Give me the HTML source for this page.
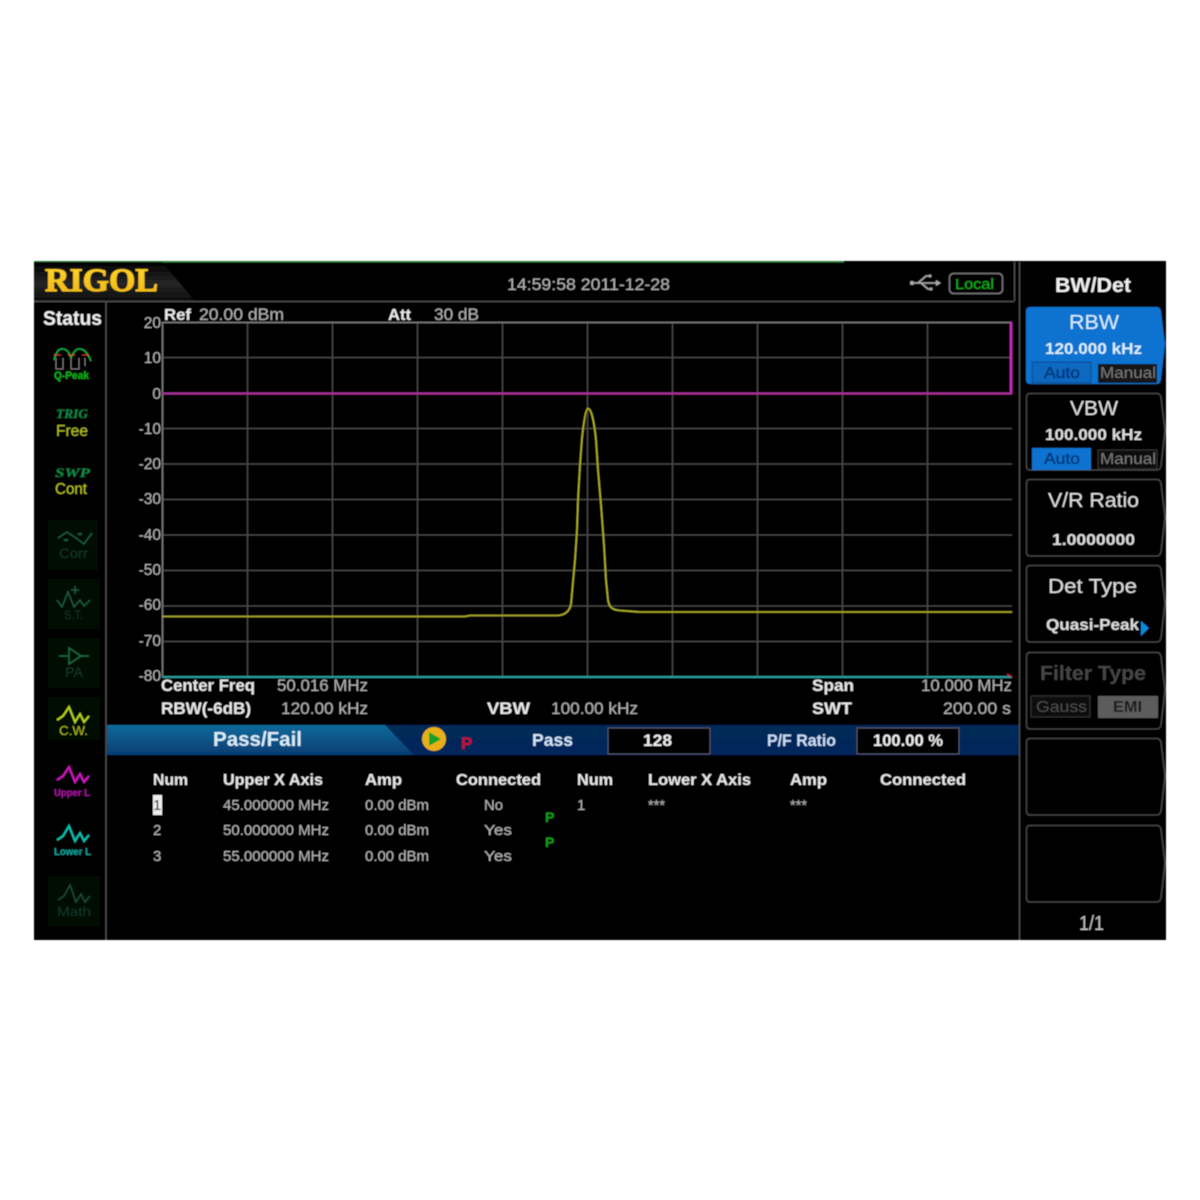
<!DOCTYPE html>
<html><head><meta charset="utf-8"><style>
html,body{margin:0;padding:0;background:#fff;width:1200px;height:1200px;overflow:hidden}
svg{display:block;position:absolute;left:0;top:0}
text{font-family:"Liberation Sans",sans-serif;fill:#ddd}
.b{font-weight:bold;fill:#e8e8e8}
.g{fill:#b0b0b0}
</style></head><body>
<svg width="1200" height="1200" viewBox="0 0 1200 1200">
<defs>
<linearGradient id="lg" x1="0" y1="0" x2="0" y2="1"><stop offset="0" stop-color="#000"/><stop offset=".55" stop-color="#262626"/><stop offset="1" stop-color="#0c0c0c"/></linearGradient>
<linearGradient id="bar" x1="0" y1="0" x2="0" y2="1"><stop offset="0" stop-color="#062a58"/><stop offset="1" stop-color="#03275c"/></linearGradient>
<linearGradient id="tab" x1="0" y1="0" x2="0" y2="1"><stop offset="0" stop-color="#0d6a9c"/><stop offset="1" stop-color="#063d72"/></linearGradient>
<linearGradient id="gold" x1="0" y1="0" x2="0" y2="1"><stop offset="0" stop-color="#ffdc30"/><stop offset="1" stop-color="#f0b010"/></linearGradient>
<filter id="s"><feGaussianBlur stdDeviation="0.5"/></filter>
</defs>
<g filter="url(#s)">
<rect x="34" y="261" width="1132" height="679" fill="#000"/>
<rect x="34" y="261" width="810" height="1.5" fill="#2f7a3a"/>
<path d="M34 262H162L195 301H34Z" fill="url(#lg)"/>
<text x="45" y="291" style="font-family:'Liberation Serif',serif;font-weight:bold;font-size:33px;fill:url(#gold);stroke:#f4c020;stroke-width:.9" textLength="113" lengthAdjust="spacingAndGlyphs">RIGOL</text>
<path d="M34 301.500H1014M1014.500 262V301M106 301V940M1019.500 262V940" stroke="#505050" stroke-width="1.500" fill="none"/>
<text x="507" y="290" class="g" font-size="17" textLength="163" lengthAdjust="spacingAndGlyphs">14:59:58 2011-12-28</text>
<!-- usb -->
<path d="M912 283H938M918 283L926 276H930M921 283L928 289H931" stroke="#aaa" stroke-width="1.500" fill="none"/>
<circle cx="912" cy="283" r="2" fill="#aaa"/><path d="M936 280L941 283L936 286Z" fill="#aaa"/><circle cx="930" cy="276" r="1.500" fill="#aaa"/><circle cx="931" cy="289" r="1.500" fill="#aaa"/>
<rect x="949.500" y="273.500" width="53" height="20" rx="4" fill="none" stroke="#777" stroke-width="1.500"/>
<text x="955" y="289" font-size="15" style="fill:#12b51c" textLength="39" lengthAdjust="spacingAndGlyphs">Local</text>

<text x="43" y="325" class="b" font-size="20" textLength="59" lengthAdjust="spacingAndGlyphs" style="fill:#eee">Status</text>

<!-- left status -->
<path d="M54 360Q57 348 63 349Q68 349 71 358Q75 348 80 349Q86 349 91 361" stroke="#1caa3a" stroke-width="1.500" fill="none"/>
<path d="M56 358V369H63V358M71 358V369H79V358M85 358V366" stroke="#777" stroke-width="1" fill="none"/>
<path d="M54 355H90" stroke="#c4302a" stroke-width="1" stroke-dasharray="7 7" fill="none"/>
<text x="54" y="379" font-size="11" font-weight="bold" style="fill:#12b51c" textLength="35" lengthAdjust="spacingAndGlyphs">Q-Peak</text>
<text x="56" y="418" font-size="13" style="font-family:'Liberation Serif',serif;font-weight:bold;font-style:italic;fill:#118a48" textLength="32" lengthAdjust="spacingAndGlyphs">TRIG</text>
<text x="56" y="436" font-size="16" style="fill:#b5c222" textLength="32" lengthAdjust="spacingAndGlyphs">Free</text>
<text x="55" y="477" font-size="13" style="font-family:'Liberation Serif',serif;font-weight:bold;font-style:italic;fill:#118a48" textLength="35" lengthAdjust="spacingAndGlyphs">SWP</text>
<text x="55" y="494" font-size="16" style="fill:#b5c222" textLength="32" lengthAdjust="spacingAndGlyphs">Cont</text>

<rect x="48" y="520" width="50" height="50" fill="#020a05"/>
<path d="M58 538L67 532L76 538L84 544L92 533" stroke="#1d5a3c" stroke-width="1.500" fill="none"/>
<path d="M64 540h4M78 534h4" stroke="#1d5a3c" stroke-width="2"/>
<text x="59" y="558" font-size="14" style="fill:#14382a" textLength="29" lengthAdjust="spacingAndGlyphs">Corr</text>
<rect x="48" y="579" width="52" height="50" fill="#020a05"/>
<path d="M57 600L62 607L68 592L74 607L80 600L84 606L90 600" stroke="#1d5a3c" stroke-width="1.500" fill="none"/>
<path d="M71 590h8M75 586v8" stroke="#1d5a3c" stroke-width="1.500"/>
<text x="64" y="619" font-size="12" style="fill:#14382a" textLength="19" lengthAdjust="spacingAndGlyphs">S.T.</text>
<rect x="48" y="638" width="52" height="50" fill="#020a05"/>
<path d="M59 656H69M69 648V664L81 656ZM81 656H89" stroke="#1d6a45" stroke-width="1.500" fill="none"/>
<text x="65" y="677" font-size="14" style="fill:#14382a" textLength="18" lengthAdjust="spacingAndGlyphs">PA</text>
<rect x="48" y="697" width="52" height="43" fill="#020a05"/>
<path d="M57 720L63 716L69 707L75 722L80 714L84 722L89 716" stroke="#b4d21e" stroke-width="2" fill="none"/>
<text x="59" y="735" font-size="12.500" style="fill:#a8b422" textLength="29" lengthAdjust="spacingAndGlyphs">C.W.</text>
<path d="M57 780L63 776L69 767L75 782L80 774L84 782L89 776" stroke="#d018c0" stroke-width="2" fill="none"/>
<text x="54" y="796" font-size="10.500" font-weight="bold" style="fill:#a818a0" textLength="36" lengthAdjust="spacingAndGlyphs">Upper L</text>
<path d="M57 840L63 836L69 826L75 841L80 833L84 841L89 835" stroke="#10c0b0" stroke-width="2" fill="none"/>
<text x="54" y="855" font-size="10.500" font-weight="bold" style="fill:#10a8a0" textLength="37" lengthAdjust="spacingAndGlyphs">Lower L</text>
<rect x="48" y="876" width="52" height="50" fill="#020a05"/>
<path d="M58 900L64 896L70 885L76 902L81 894L85 902L90 896" stroke="#1d4a38" stroke-width="1.500" fill="none"/>
<text x="57" y="916" font-size="13" style="fill:#14382a" textLength="34" lengthAdjust="spacingAndGlyphs">Math</text>

<!-- grid -->
<g stroke="#484848" stroke-width="1.500" fill="none">
<path d="M247.500 322V677M332.500 322V677M417.500 322V677M502.500 322V677M587.500 322V677M672.500 322V677M757.500 322V677M842.500 322V677M927.500 322V677"/>
<path d="M162 357.500H1012M162 428.500H1012M162 464H1012M162 499.500H1012M162 535H1012M162 570.500H1012M162 606H1012M162 641.500H1012"/>
</g>
<path d="M162.500 677V322.500H1011" stroke="#808080" stroke-width="1.500" fill="none"/>
<path d="M1011 322V394" stroke="#d02ac0" stroke-width="2.500"/>
<path d="M162 393.500H1012" stroke="#a8309a" stroke-width="2"/>
<path d="M162 677H1012" stroke="#2a9a9a" stroke-width="2"/>
<path d="M1007 674L1012 677" stroke="#c02030" stroke-width="1.500"/>
<path d="M162 616.500H465L470 615.500H558C566 615 570 610 571 604L573 582L575 560L577 530L578 500L580 465L582 438C584 420 586 408.500 588 408.500C591 408.500 594 420 596 440L598 470L601 505L604 545L606 580L608 600C609 607 612 610 620 610.500L640 612H1012" stroke="#b4b428" stroke-width="1.600" fill="none"/>

<!-- y labels -->
<g font-size="15.500" text-anchor="end">
<text x="161" y="328" style="fill:#b0b0b0">20</text><text x="161" y="363" style="fill:#b0b0b0">10</text><text x="161" y="399" style="fill:#b0b0b0">0</text>
<text x="161" y="434" style="fill:#b0b0b0">-10</text><text x="161" y="469" style="fill:#b0b0b0">-20</text><text x="161" y="504" style="fill:#b0b0b0">-30</text>
<text x="161" y="540" style="fill:#b0b0b0">-40</text><text x="161" y="575" style="fill:#b0b0b0">-50</text><text x="161" y="610" style="fill:#b0b0b0">-60</text>
<text x="161" y="646" style="fill:#b0b0b0">-70</text><text x="161" y="681" style="fill:#b0b0b0">-80</text>
</g>
<text x="164" y="320" class="b" font-size="16" textLength="27" lengthAdjust="spacingAndGlyphs">Ref</text>
<text x="199" y="320" class="g" font-size="17" textLength="85" lengthAdjust="spacingAndGlyphs">20.00 dBm</text>
<text x="388" y="320" class="b" font-size="16" textLength="23" lengthAdjust="spacingAndGlyphs">Att</text>
<text x="434" y="320" class="g" font-size="17" textLength="45" lengthAdjust="spacingAndGlyphs">30 dB</text>

<text x="161" y="691" class="b" font-size="17" textLength="94" lengthAdjust="spacingAndGlyphs">Center Freq</text>
<text x="277" y="691" class="g" font-size="17" textLength="91" lengthAdjust="spacingAndGlyphs">50.016 MHz</text>
<text x="161" y="714" class="b" font-size="17" textLength="90" lengthAdjust="spacingAndGlyphs">RBW(-6dB)</text>
<text x="281" y="714" class="g" font-size="17" textLength="87" lengthAdjust="spacingAndGlyphs">120.00 kHz</text>
<text x="487" y="714" class="b" font-size="17" textLength="43" lengthAdjust="spacingAndGlyphs">VBW</text>
<text x="551" y="714" class="g" font-size="17" textLength="87" lengthAdjust="spacingAndGlyphs">100.00 kHz</text>
<text x="812" y="691" class="b" font-size="17" textLength="42" lengthAdjust="spacingAndGlyphs">Span</text>
<text x="921" y="691" class="g" font-size="17" textLength="91" lengthAdjust="spacingAndGlyphs">10.000 MHz</text>
<text x="812" y="714" class="b" font-size="17" textLength="40" lengthAdjust="spacingAndGlyphs">SWT</text>
<text x="943" y="714" class="g" font-size="17" textLength="68" lengthAdjust="spacingAndGlyphs">200.00 s</text>

<!-- bar -->
<rect x="107" y="725" width="912" height="30" fill="url(#bar)"/>
<path d="M107 725H385L414 755H107Z" fill="url(#tab)"/>
<text x="213" y="746" font-size="20" font-weight="bold" style="fill:#d8ecf8" textLength="89" lengthAdjust="spacingAndGlyphs">Pass/Fail</text>
<circle cx="434" cy="739" r="12" fill="#e8b018"/>
<path d="M429 732L441 739L429 746Z" fill="#12a02a"/>
<text x="461" y="749" font-size="17" font-weight="bold" style="fill:#d01030">P</text>
<text x="532" y="746" font-size="17.500" font-weight="bold" style="fill:#d0e4f8" textLength="41" lengthAdjust="spacingAndGlyphs">Pass</text>
<rect x="608" y="728" width="102" height="26" fill="#000" stroke="#556" stroke-width="1"/>
<text x="643" y="746" font-size="17" font-weight="bold" textLength="29" lengthAdjust="spacingAndGlyphs" style="fill:#eee">128</text>
<text x="767" y="746" font-size="17" font-weight="bold" style="fill:#c8dcf4" textLength="69" lengthAdjust="spacingAndGlyphs">P/F Ratio</text>
<rect x="857" y="728" width="102" height="26" fill="#000" stroke="#556" stroke-width="1"/>
<text x="873" y="746" font-size="17" font-weight="bold" textLength="70" lengthAdjust="spacingAndGlyphs" style="fill:#eee">100.00 %</text>

<!-- table -->
<text x="153" y="785" class="b" font-size="15.500" textLength="35" lengthAdjust="spacingAndGlyphs">Num</text>
<text x="223" y="785" class="b" font-size="15.500" textLength="100" lengthAdjust="spacingAndGlyphs">Upper X Axis</text>
<text x="365" y="785" class="b" font-size="15.500" textLength="37" lengthAdjust="spacingAndGlyphs">Amp</text>
<text x="456" y="785" class="b" font-size="15.500" textLength="85" lengthAdjust="spacingAndGlyphs">Connected</text>
<text x="577" y="785" class="b" font-size="15.500" textLength="36" lengthAdjust="spacingAndGlyphs">Num</text>
<text x="648" y="785" class="b" font-size="15.500" textLength="103" lengthAdjust="spacingAndGlyphs">Lower X Axis</text>
<text x="790" y="785" class="b" font-size="15.500" textLength="37" lengthAdjust="spacingAndGlyphs">Amp</text>
<text x="880" y="785" class="b" font-size="15.500" textLength="86" lengthAdjust="spacingAndGlyphs">Connected</text>
<rect x="153" y="795" width="9" height="20" fill="#eee"/>
<text x="153" y="810" font-size="15" style="fill:#222">1</text>
<g font-size="15">
<text x="153" y="835" style="fill:#b4b4b4">2</text><text x="153" y="861" style="fill:#b4b4b4">3</text>
<text x="223" y="810" style="fill:#b4b4b4" textLength="106" lengthAdjust="spacingAndGlyphs">45.000000 MHz</text>
<text x="223" y="835" style="fill:#b4b4b4" textLength="106" lengthAdjust="spacingAndGlyphs">50.000000 MHz</text>
<text x="223" y="861" style="fill:#b4b4b4" textLength="106" lengthAdjust="spacingAndGlyphs">55.000000 MHz</text>
<text x="365" y="810" style="fill:#b4b4b4" textLength="64" lengthAdjust="spacingAndGlyphs">0.00 dBm</text>
<text x="365" y="835" style="fill:#b4b4b4" textLength="64" lengthAdjust="spacingAndGlyphs">0.00 dBm</text>
<text x="365" y="861" style="fill:#b4b4b4" textLength="64" lengthAdjust="spacingAndGlyphs">0.00 dBm</text>
<text x="484" y="810" style="fill:#b4b4b4" textLength="19" lengthAdjust="spacingAndGlyphs">No</text>
<text x="484" y="835" style="fill:#b4b4b4" textLength="28" lengthAdjust="spacingAndGlyphs">Yes</text>
<text x="484" y="861" style="fill:#b4b4b4" textLength="28" lengthAdjust="spacingAndGlyphs">Yes</text>
<text x="577" y="810" style="fill:#b4b4b4">1</text>
<text x="648" y="810" style="fill:#b4b4b4" textLength="17" lengthAdjust="spacingAndGlyphs">***</text>
<text x="790" y="810" style="fill:#b4b4b4" textLength="17" lengthAdjust="spacingAndGlyphs">***</text>
</g>
<text x="545" y="822" font-size="14" font-weight="bold" style="fill:#0ca018">P</text>
<text x="545" y="847" font-size="14" font-weight="bold" style="fill:#0ca018">P</text>

<!-- softkeys -->
<text x="1055" y="292" class="b" font-size="20" textLength="76" lengthAdjust="spacingAndGlyphs" style="fill:#eee">BW/Det</text>

<path d="M1030 307H1157Q1160 307 1161 311L1165 344L1161 379Q1160 384 1157 384H1030Q1026 384 1026 380V311Q1026 307 1030 307Z" fill="#0a72d0"/>
<text x="1069" y="329" font-size="20" style="fill:#d8f0ff" textLength="50" lengthAdjust="spacingAndGlyphs">RBW</text>
<text x="1045" y="354" font-size="16" font-weight="bold" style="fill:#d8f0ff" textLength="97" lengthAdjust="spacingAndGlyphs">120.000 kHz</text>
<rect x="1032" y="362" width="59" height="21" fill="#0a68c0" stroke="#0a4a90" stroke-width="1"/>
<text x="1044" y="378" font-size="16" style="fill:#06316e;stroke:#06316e;stroke-width:.3" textLength="36" lengthAdjust="spacingAndGlyphs">Auto</text>
<rect x="1098" y="364" width="59" height="19" fill="#151515"/>
<text x="1100" y="378" font-size="16" style="fill:#777" textLength="56" lengthAdjust="spacingAndGlyphs">Manual</text>

<g fill="none" stroke="#444" stroke-width="1.500">
<path d="M1030 393.500H1157Q1160 393.500 1161 397L1165 430L1161 466Q1160 470 1157 470H1030Q1026.500 470 1026.500 466V397Q1026.500 393.500 1030 393.500Z"/>
<path d="M1030 479.500H1157Q1160 479.500 1161 483L1165 517L1161 552Q1160 556 1157 556H1030Q1026.500 556 1026.500 552V483Q1026.500 479.500 1030 479.500Z"/>
<path d="M1030 565.500H1157Q1160 565.500 1161 569L1165 603L1161 638Q1160 642 1157 642H1030Q1026.500 642 1026.500 638V569Q1026.500 565.500 1030 565.500Z"/>
<path d="M1030 652.500H1157Q1160 652.500 1161 656L1165 690L1161 725Q1160 729 1157 729H1030Q1026.500 729 1026.500 725V656Q1026.500 652.500 1030 652.500Z"/>
<path d="M1030 738.500H1157Q1160 738.500 1161 742L1165 776L1161 811Q1160 815 1157 815H1030Q1026.500 815 1026.500 811V742Q1026.500 738.500 1030 738.500Z"/>
<path d="M1030 825.500H1157Q1160 825.500 1161 829L1165 863L1161 898Q1160 902 1157 902H1030Q1026.500 902 1026.500 898V829Q1026.500 825.500 1030 825.500Z"/>
</g>
<text x="1070" y="415" font-size="20" style="fill:#ddd" textLength="48" lengthAdjust="spacingAndGlyphs">VBW</text>
<text x="1045" y="440" font-size="16" font-weight="bold" style="fill:#ddd" textLength="97" lengthAdjust="spacingAndGlyphs">100.000 kHz</text>
<rect x="1032" y="448" width="59" height="22" fill="#0a72d0"/>
<text x="1044" y="464" font-size="16" style="fill:#06316e;stroke:#06316e;stroke-width:.3" textLength="36" lengthAdjust="spacingAndGlyphs">Auto</text>
<rect x="1098" y="450" width="59" height="19" fill="#111" stroke="#333"/>
<text x="1100" y="464" font-size="16" style="fill:#777" textLength="56" lengthAdjust="spacingAndGlyphs">Manual</text>
<text x="1048" y="507" font-size="20" style="fill:#ddd" textLength="91" lengthAdjust="spacingAndGlyphs">V/R Ratio</text>
<text x="1052" y="545" font-size="16" font-weight="bold" style="fill:#ddd" textLength="83" lengthAdjust="spacingAndGlyphs">1.0000000</text>
<text x="1048" y="593" font-size="20" style="fill:#ddd" textLength="89" lengthAdjust="spacingAndGlyphs">Det Type</text>
<text x="1046" y="630" font-size="16" font-weight="bold" style="fill:#ddd" textLength="93" lengthAdjust="spacingAndGlyphs">Quasi-Peak</text>
<path d="M1141 621L1149 628L1141 636Z" fill="#1088d8"/>
<text x="1040" y="680" font-size="20" font-weight="bold" style="fill:#444" textLength="106" lengthAdjust="spacingAndGlyphs">Filter Type</text>
<rect x="1031" y="696" width="59" height="21" fill="#0a0a0a" stroke="#333"/>
<text x="1036" y="712" font-size="16" style="fill:#4c4c4c" textLength="51" lengthAdjust="spacingAndGlyphs">Gauss</text>
<rect x="1098" y="696" width="60" height="22" fill="#5c5c5c"/>
<text x="1113" y="712" font-size="16" font-weight="bold" style="fill:#1a1a1a" textLength="29" lengthAdjust="spacingAndGlyphs">EMI</text>
<text x="1079" y="930" font-size="20" style="fill:#bbb" textLength="25" lengthAdjust="spacingAndGlyphs">1/1</text>
</g>
</svg>
</body></html>
